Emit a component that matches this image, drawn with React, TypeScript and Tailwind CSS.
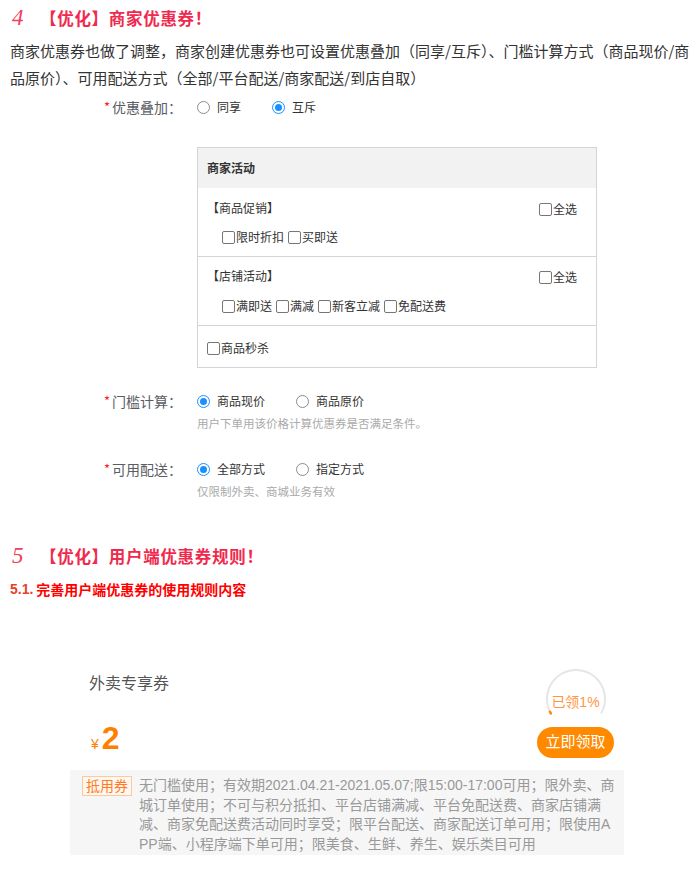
import React from "react";

const cjk = "font-['Noto_Sans_CJK_SC',sans-serif]";

function Radio({ checked, label }: { checked?: boolean; label: string }) {
  return (
    <label className="flex items-center mr-[31px]">
      {checked ? (
        <span className="w-[13px] h-[13px] rounded-full border border-[#1890ff] flex items-center justify-center bg-white">
          <span className="w-[7px] h-[7px] rounded-full bg-[#1890ff]" />
        </span>
      ) : (
        <span className="w-[13px] h-[13px] rounded-full border border-[#8c8c8c] bg-white" />
      )}
      <span className="ml-[7px] text-[12px] text-[#333]">{label}</span>
    </label>
  );
}

function Check({ label }: { label: string }) {
  return (
    <span className="inline-flex items-center mr-[4px]">
      <span className="w-[13px] h-[13px] rounded-[2px] border border-[#767676] bg-white" />
      <span className="ml-[1px] text-[12px] text-[#333]">{label}</span>
    </span>
  );
}

function FormRow({ label, children }: { label: string; children: React.ReactNode }) {
  return (
    <div className="flex items-center h-[20px]">
      <div className="w-[182px] flex justify-end items-center text-[14px] text-[#5a5d63]">
        <span className="text-[#f5222d] mr-[2px] text-[13px]">*</span>
        {label}
      </div>
      <div className="ml-[15px] flex items-center">{children}</div>
    </div>
  );
}

function Heading({ num, text }: { num: string; text: string }) {
  return (
    <div className="flex items-center h-[37px]">
      <span className="pl-[12px] w-[40px] italic text-[23px] text-[#f0405a] font-['Liberation_Serif',serif]">
        {num}
      </span>
      <span className="text-[16.5px] font-bold tracking-[0.7px] text-[#f02a4e]">{text}</span>
    </div>
  );
}

export default function App() {
  return (
    <div className={`w-[695px] h-[875px] bg-white overflow-hidden ${cjk}`}>
      <Heading num="4" text="【优化】商家优惠券！" />
      <p className="pl-[10px] w-[695px] text-[15px] leading-[27px] text-[#333]">
        商家优惠券也做了调整，商家创建优惠券也可设置优惠叠加（同享/互斥）、门槛计算方式（商品现价/商品原价）、可用配送方式（全部/平台配送/商家配送/到店自取）
      </p>

      <div className="mt-[6px]">
        <FormRow label="优惠叠加：">
          <Radio label="同享" />
          <Radio checked label="互斥" />
        </FormRow>
      </div>

      <div className="mt-[30px] ml-[197px] w-[400px] border border-[#d4d4d4]">
        <div className="h-[40px] bg-[#f2f2f2] flex items-center pl-[9px] text-[12px] font-bold text-[#333]">
          商家活动
        </div>
        <div className="border-b border-[#d4d4d4] pt-[12px] pb-[11px]">
          <div className="flex justify-between items-center h-[16px] pl-[9px] pr-[15px] text-[12px] text-[#333]">
            <span>【商品促销】</span>
            <span className="mt-[4px]"><Check label="全选" /></span>
          </div>
          <div className="flex items-center h-[16px] mt-[13px] pl-[24px]">
            <Check label="限时折扣" />
            <Check label="买即送" />
          </div>
        </div>
        <div className="border-b border-[#d4d4d4] pt-[11px] pb-[11px]">
          <div className="flex justify-between items-center h-[16px] pl-[9px] pr-[15px] text-[12px] text-[#333]">
            <span>【店铺活动】</span>
            <span className="mt-[4px]"><Check label="全选" /></span>
          </div>
          <div className="flex items-center h-[16px] mt-[14px] pl-[24px]">
            <Check label="满即送" />
            <Check label="满减" />
            <Check label="新客立减" />
            <Check label="免配送费" />
          </div>
        </div>
        <div className="pt-[14px] pb-[11px] pl-[9px] flex items-center h-[41px]">
          <Check label="商品秒杀" />
        </div>
      </div>

      <div className="mt-[23px]">
        <FormRow label="门槛计算：">
          <Radio checked label="商品现价" />
          <Radio label="商品原价" />
        </FormRow>
        <div className="mt-[4px] ml-[197px] h-[16px] leading-[16px] text-[11.5px] text-[#aaa]">
          用户下单用该价格计算优惠券是否满足条件。
        </div>
      </div>

      <div className="mt-[28px]">
        <FormRow label="可用配送：">
          <Radio checked label="全部方式" />
          <Radio label="指定方式" />
        </FormRow>
        <div className="mt-[4px] ml-[197px] h-[16px] leading-[16px] text-[11.5px] text-[#aaa]">
          仅限制外卖、商城业务有效
        </div>
      </div>

      <div className="mt-[39px]">
        <Heading num="5" text="【优化】用户端优惠券规则！" />
      </div>
      <div className="mt-[4px] h-[20px] flex items-center pl-[10px] text-[14px] font-bold">
        <span className="text-[#e8402a] mr-[3px] font-['Liberation_Sans',sans-serif]">5.1.</span>
        <span className="text-[#ff0000]">完善用户端优惠券的使用规则内容</span>
      </div>

      <div className="mt-[62px] ml-[70px] w-[554px] font-['Liberation_Sans','Noto_Sans_CJK_SC',sans-serif]">
        <div className="flex justify-between items-start pr-[10px]">
          <div className="pl-[19px] pt-[13px]">
            <div className="text-[16px] leading-[20px] text-[#555]">外卖专享券</div>
            <div className="mt-[28px] flex items-baseline text-[#ff7f00] leading-[32px]">
              <span className="ml-[2px] text-[14px]">¥</span>
              <span className="ml-[3px] text-[32px] font-bold">2</span>
            </div>
          </div>
          <div className="pt-[8px] w-[77px] flex flex-col items-center">
            <div className="relative w-[60px] h-[58px]">
              <svg width="60" height="58" viewBox="0 0 60 58">
                <path d="M 4.89 44.5 A 29 29 0 1 1 55.11 44.5" fill="none" stroke="#e6e6e6" strokeWidth="2" />
                <path d="M 4.89 44.5 A 29 29 0 0 1 3.93 42.71" fill="none" stroke="#ff8a00" strokeWidth="2.5" strokeLinecap="round" />
              </svg>
              <div className="absolute inset-x-0 top-[24px] text-center text-[14px] leading-[18px] text-[#ff963f] whitespace-nowrap">
                已领1%
              </div>
            </div>
            <button className="w-[77px] h-[31px] rounded-full bg-[#ff8a00] text-white text-[15px]">
              立即领取
            </button>
          </div>
        </div>
        <div className="mt-[10px] h-[85px] bg-[#f6f6f6] flex pl-[12px] pt-[6px]">
          <span className="h-[20px] px-[3px] border border-[#ffc79a] bg-[#fff8f0] text-[14px] leading-[18px] text-[#ff7a28] shrink-0">
            抵用券
          </span>
          <div className="ml-[7px] text-[14px] leading-[19.5px] text-[#999] whitespace-nowrap">
            <div>无门槛使用；有效期2021.04.21-2021.05.07;限15:00-17:00可用；限外卖、商</div>
            <div>城订单使用；不可与积分抵扣、平台店铺满减、平台免配送费、商家店铺满</div>
            <div>减、商家免配送费活动同时享受；限平台配送、商家配送订单可用；限使用A</div>
            <div>PP端、小程序端下单可用；限美食、生鲜、养生、娱乐类目可用</div>
          </div>
        </div>
      </div>
    </div>
  );
}
